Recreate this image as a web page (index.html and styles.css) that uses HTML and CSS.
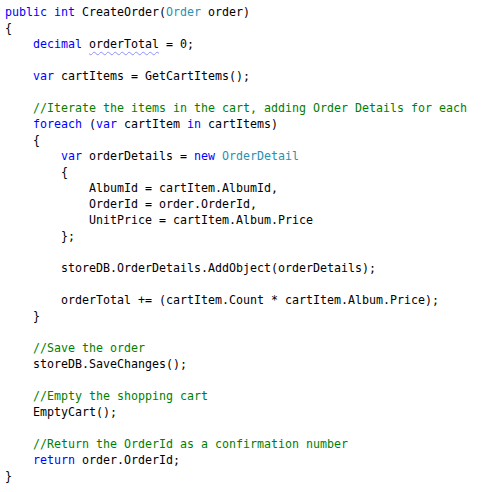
FILE: index.html
```html
<!DOCTYPE html>
<html>
<head>
<meta charset="utf-8">
<link rel="stylesheet" href="styles.css">
</head>
<body>
<div class="code">
  <div class="ln"><span class="kw">public</span> <span class="kw">int</span> CreateOrder(<span class="ty">Order</span> order)</div>
  <div class="ln">{</div>
  <div class="ln i1"><span class="kw">decimal</span> <span class="warn">orderTotal</span> = 0;</div>
  <div class="ln"></div>
  <div class="ln i1"><span class="kw">var</span> cartItems = GetCartItems();</div>
  <div class="ln"></div>
  <div class="ln i1"><span class="cm">//Iterate the items in the cart, adding Order Details for each</span></div>
  <div class="ln i1"><span class="kw">foreach</span> (<span class="kw">var</span> cartItem <span class="kw">in</span> cartItems)</div>
  <div class="ln i1">{</div>
  <div class="ln i2"><span class="kw">var</span> orderDetails = <span class="kw">new</span> <span class="ty">OrderDetail</span></div>
  <div class="ln i2">{</div>
  <div class="ln i3">AlbumId = cartItem.AlbumId,</div>
  <div class="ln i3">OrderId = order.OrderId,</div>
  <div class="ln i3">UnitPrice = cartItem.Album.Price</div>
  <div class="ln i2">};</div>
  <div class="ln"></div>
  <div class="ln i2">storeDB.OrderDetails.AddObject(orderDetails);</div>
  <div class="ln"></div>
  <div class="ln i2">orderTotal += (cartItem.Count * cartItem.Album.Price);</div>
  <div class="ln i1">}</div>
  <div class="ln"></div>
  <div class="ln i1"><span class="cm">//Save the order</span></div>
  <div class="ln i1">storeDB.SaveChanges();</div>
  <div class="ln"></div>
  <div class="ln i1"><span class="cm">//Empty the shopping cart</span></div>
  <div class="ln i1">EmptyCart();</div>
  <div class="ln"></div>
  <div class="ln i1"><span class="cm">//Return the OrderId as a confirmation number</span></div>
  <div class="ln i1"><span class="kw">return</span> order.OrderId;</div>
  <div class="ln">}</div>
</div>
</body>
</html>
```
FILE: styles.css
```css
html, body {
  margin: 0;
  padding: 0;
  background: #ffffff;
}
.code {
  display: flex;
  flex-direction: column;
  padding: 4px 0 0 5px;
  font-family: "DejaVu Sans Mono", "Liberation Mono", monospace;
  font-size: 11.63px;
  line-height: 16px;
  color: #000000;
}
.ln {
  height: 16px;
  white-space: pre;
}
.i1 { padding-left: 28px; }
.i2 { padding-left: 56px; }
.i3 { padding-left: 84px; }
.kw { color: #0000ff; }
.ty { color: #2b91af; }
.cm { color: #008000; }
.warn {
  text-decoration: underline wavy #8f8fff;
  text-decoration-thickness: 1px;
  text-underline-offset: 3px;
}
```
